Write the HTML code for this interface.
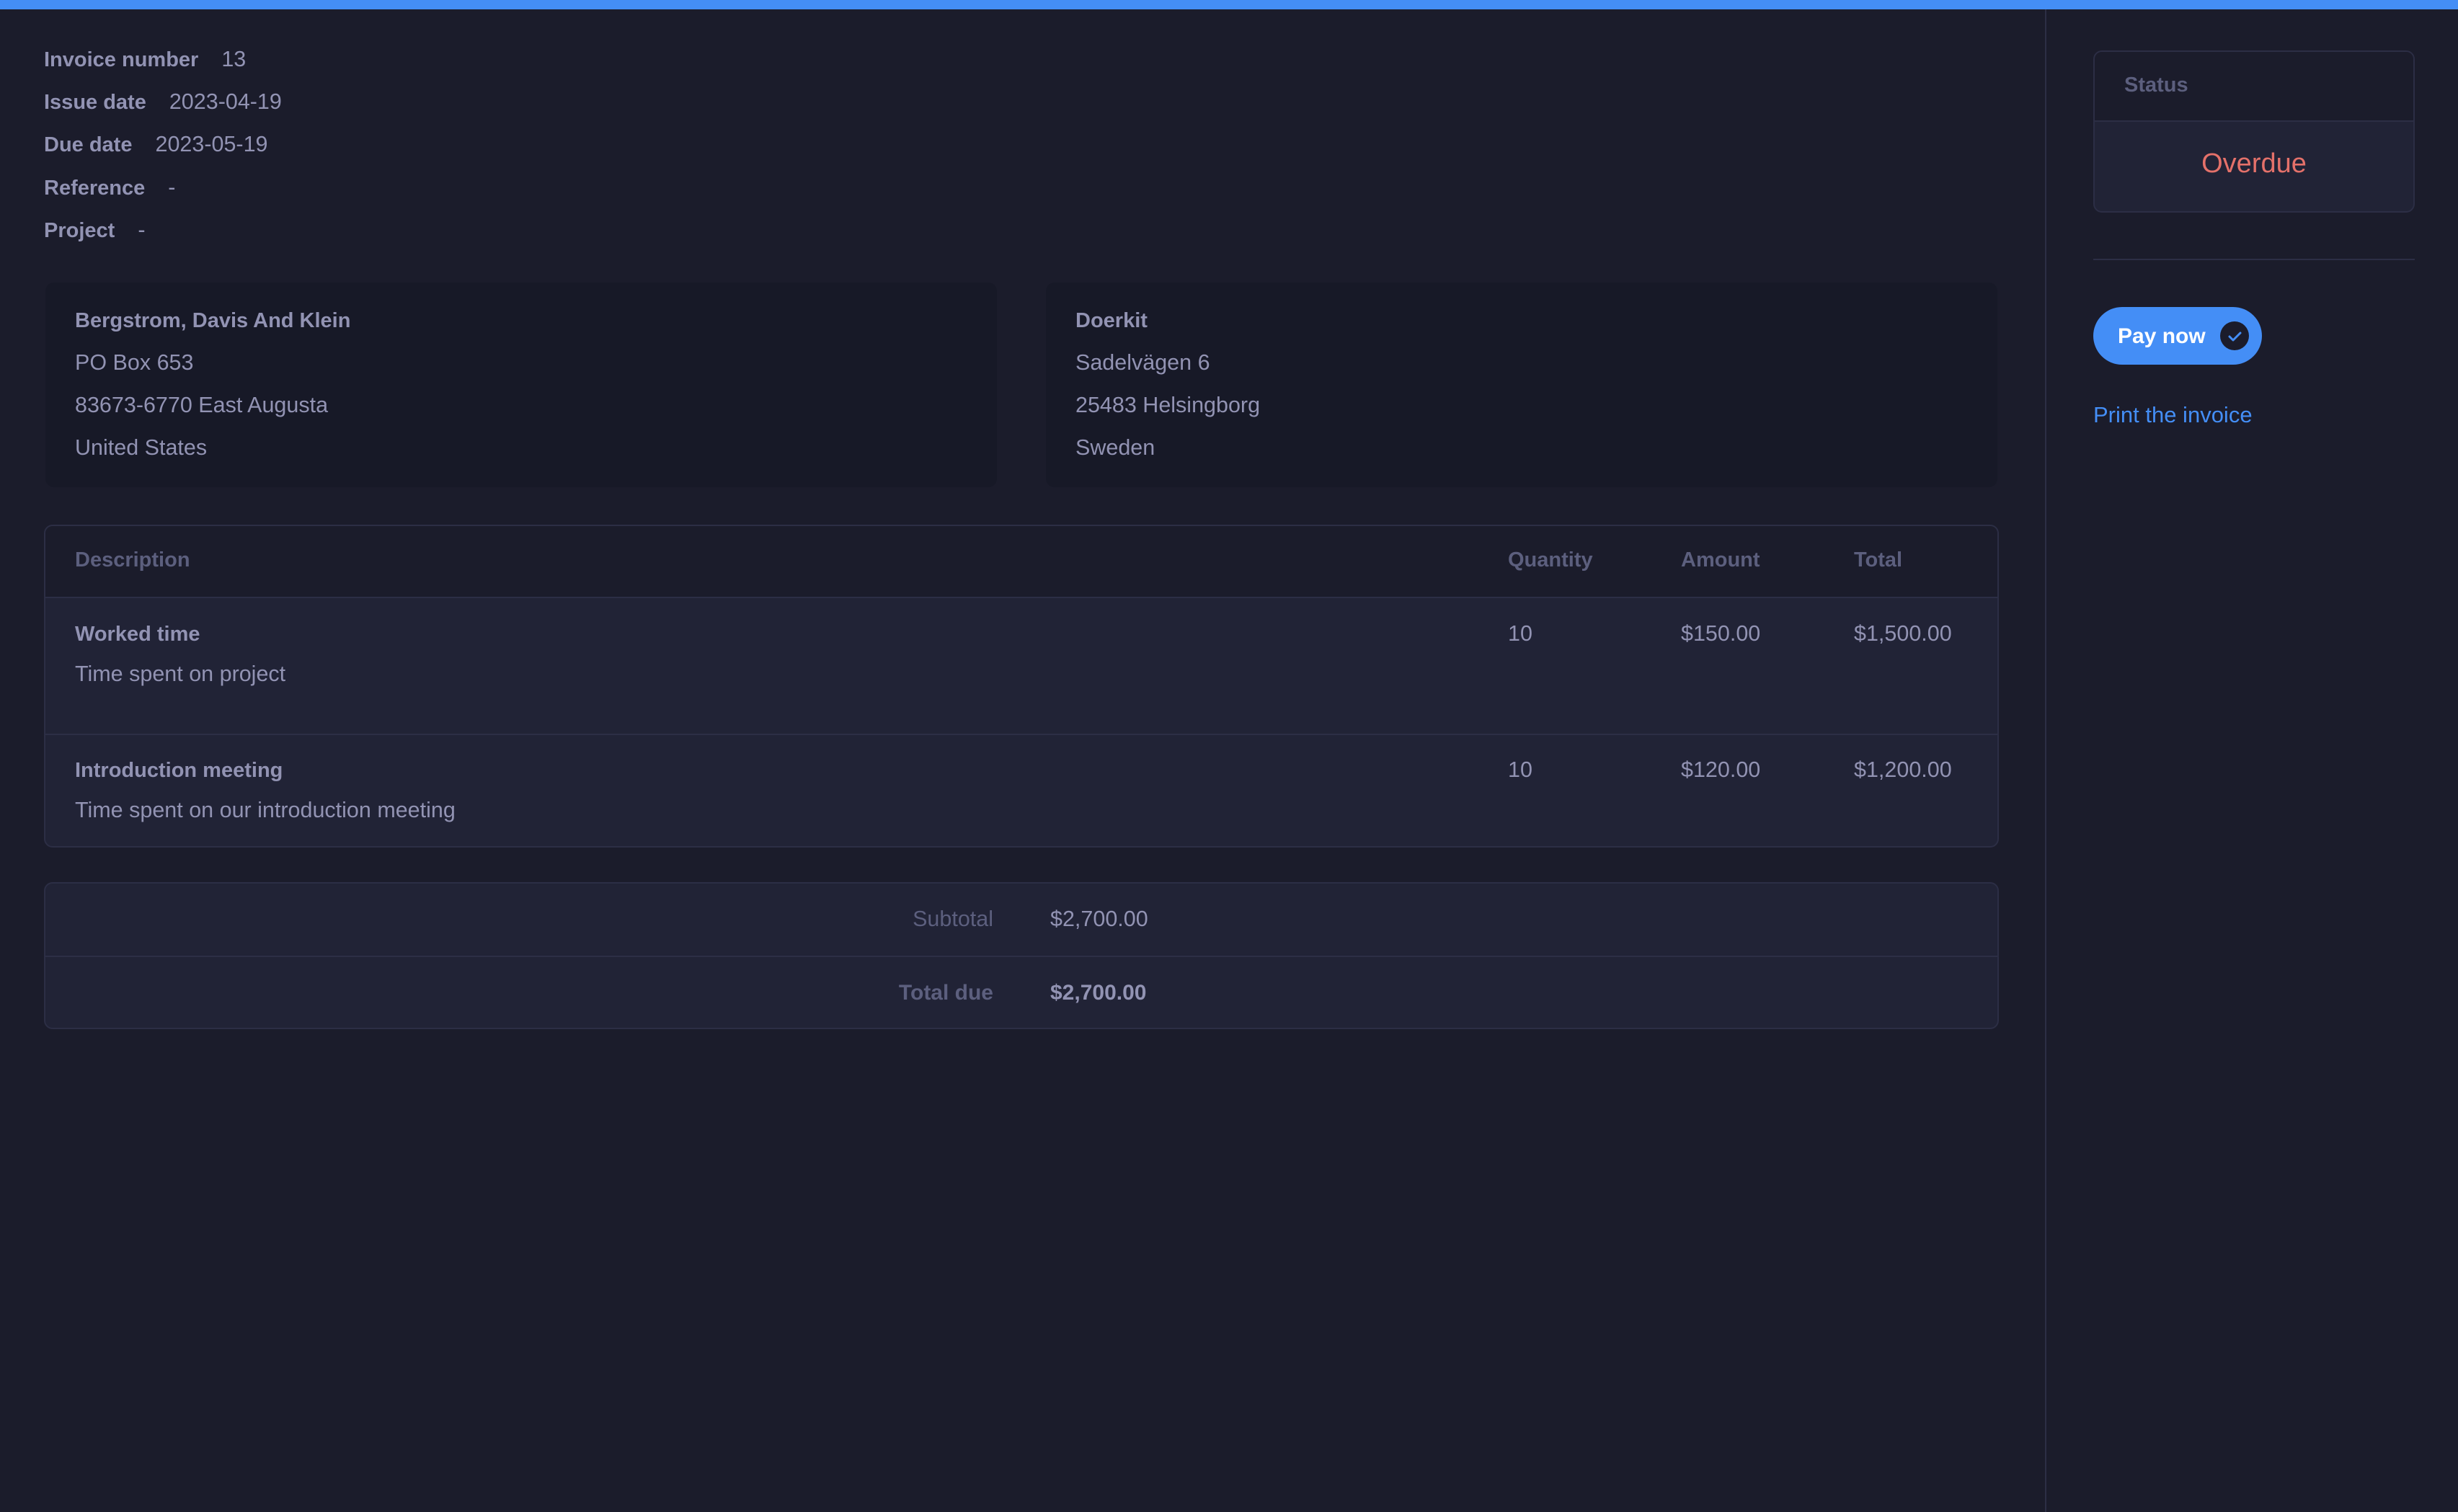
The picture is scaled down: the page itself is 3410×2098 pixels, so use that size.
<!DOCTYPE html>
<html><head><meta charset="utf-8"><style>
*{margin:0;padding:0;box-sizing:border-box}
body{width:3410px;height:2098px;background:#1b1c2b;font-family:"Liberation Sans",sans-serif;color:#9293b3;position:relative;overflow:hidden;font-size:30.5px}
.a{position:absolute;white-space:nowrap;line-height:1}
.b{font-weight:bold;font-size:29px}
.h{color:#5c5f7e;font-weight:bold;font-size:29px}
.box{position:absolute;border:2px solid #2c2e45;border-radius:12px;overflow:hidden}
.g{display:inline-block}
</style></head><body>
<div class="a" style="left:0;top:0;width:3410px;height:13px;background:#448ef6"></div>
<div class="a" style="left:2837px;top:13px;width:2px;height:2085px;background:#2c2e45"></div>

<div class="a" style="left:61px;top:67px"><span class="b">Invoice number</span><span class="g" style="width:32px"></span>13</div>
<div class="a" style="left:61px;top:126px"><span class="b">Issue date</span><span class="g" style="width:32px"></span>2023-04-19</div>
<div class="a" style="left:61px;top:185px"><span class="b">Due date</span><span class="g" style="width:32px"></span>2023-05-19</div>
<div class="a" style="left:61px;top:245px"><span class="b">Reference</span><span class="g" style="width:32px"></span>-</div>
<div class="a" style="left:61px;top:304px"><span class="b">Project</span><span class="g" style="width:32px"></span>-</div>

<div class="a" style="left:63px;top:392px;width:1320px;height:284px;background:#171927;border-radius:12px"></div>
<div class="a b" style="left:104px;top:431px">Bergstrom, Davis And Klein</div>
<div class="a" style="left:104px;top:488px">PO Box 653</div>
<div class="a" style="left:104px;top:547px">83673-6770 East Augusta</div>
<div class="a" style="left:104px;top:606px">United States</div>

<div class="a" style="left:1451px;top:392px;width:1320px;height:284px;background:#171927;border-radius:12px"></div>
<div class="a b" style="left:1492px;top:431px">Doerkit</div>
<div class="a" style="left:1492px;top:488px">Sadelvägen 6</div>
<div class="a" style="left:1492px;top:547px">25483 Helsingborg</div>
<div class="a" style="left:1492px;top:606px">Sweden</div>

<div class="box" style="left:61px;top:728px;width:2712px;height:448px;background:#212336">
 <div class="a" style="left:0;top:0;width:2712px;height:100px;background:#1b1c2b;border-bottom:2px solid #2c2e45"></div>
 <div class="a" style="left:0;top:288px;width:2712px;height:2px;background:#2c2e45"></div>
</div>
<div class="a h" style="left:104px;top:763px">Description</div>
<div class="a h" style="left:2092px;top:763px">Quantity</div>
<div class="a h" style="left:2332px;top:763px">Amount</div>
<div class="a h" style="left:2572px;top:763px">Total</div>
<div class="a b" style="left:104px;top:866px">Worked time</div>
<div class="a" style="left:104px;top:920px">Time spent on project</div>
<div class="a" style="left:2092px;top:864px">10</div>
<div class="a" style="left:2332px;top:864px">$150.00</div>
<div class="a" style="left:2572px;top:864px">$1,500.00</div>
<div class="a b" style="left:104px;top:1055px">Introduction meeting</div>
<div class="a" style="left:104px;top:1109px">Time spent on our introduction meeting</div>
<div class="a" style="left:2092px;top:1053px">10</div>
<div class="a" style="left:2332px;top:1053px">$120.00</div>
<div class="a" style="left:2572px;top:1053px">$1,200.00</div>

<div class="box" style="left:61px;top:1224px;width:2712px;height:204px;background:#212336">
 <div class="a" style="left:0;top:100px;width:2712px;height:2px;background:#2c2e45"></div>
</div>
<div class="a" style="right:2032px;top:1260px;color:#5c5f7e">Subtotal</div>
<div class="a" style="left:1457px;top:1260px">$2,700.00</div>
<div class="a b" style="right:2032px;top:1363px;color:#5c5f7e;font-size:30px">Total due</div>
<div class="a b" style="left:1457px;top:1363px;font-size:30px">$2,700.00</div>

<div class="box" style="left:2904px;top:70px;width:446px;height:225px;background:#212336">
 <div class="a" style="left:0;top:0;width:446px;height:97px;background:#1b1c2b;border-bottom:2px solid #2c2e45"></div>
</div>
<div class="a h" style="left:2947px;top:104px;font-size:29px">Status</div>
<div class="a" style="left:2904px;top:208px;width:446px;text-align:center;color:#e4716a;font-size:38px">Overdue</div>
<div class="a" style="left:2904px;top:359px;width:446px;height:2px;background:#2c2e45"></div>

<div class="a" style="left:2904px;top:426px;width:234px;height:80px;background:#448ef6;border-radius:40px"></div>
<div class="a b" style="left:2938px;top:452px;color:#fff;font-size:30px">Pay now</div>
<svg class="a" style="left:3080px;top:446px" width="40" height="40" viewBox="0 0 40 40"><circle cx="20" cy="20" r="20" fill="#1b1c2b"/><path d="M13 21l5 5 10-10" stroke="#448ef6" stroke-width="3" fill="none" stroke-linecap="round" stroke-linejoin="round"/></svg>
<div class="a" style="left:2904px;top:560px;color:#448ef6;font-size:31px">Print the invoice</div>
</body></html>
